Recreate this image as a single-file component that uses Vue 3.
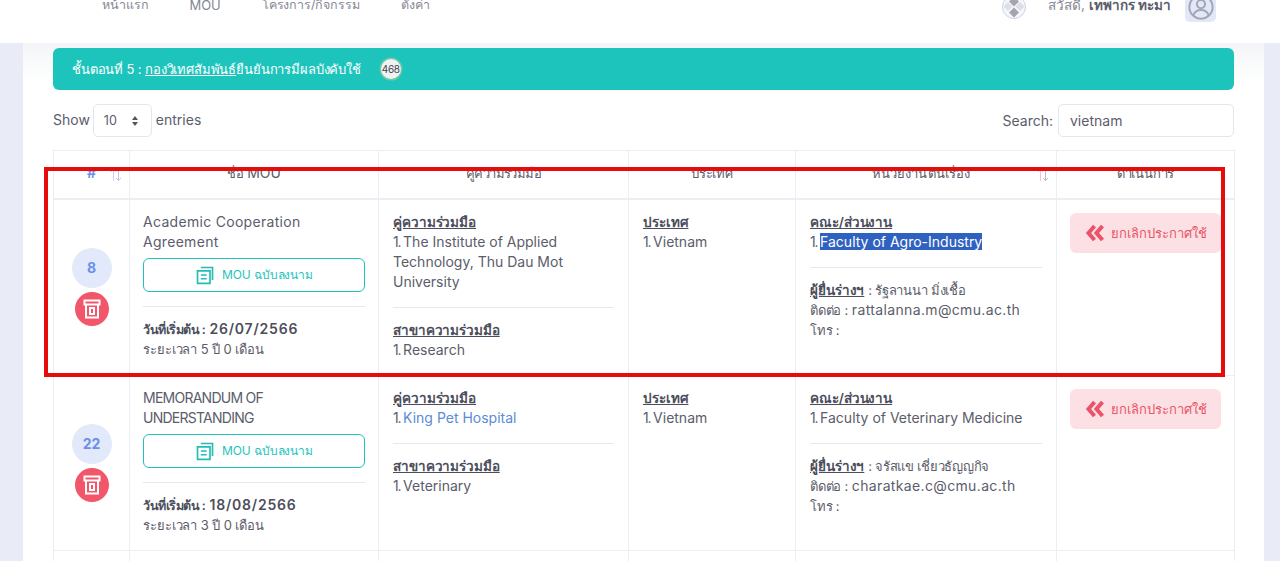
<script setup>
const rows = [
  {
    no: 8,
    name: ['Academic Cooperation', 'Agreement'],
    caps: false,
    start: '26/07/2566',
    years: 5,
    partners: ['The Institute of Applied Technology, Thu Dau Mot University'],
    partnerLink: false,
    field: 'Research',
    faculty: 'Faculty of Agro-Industry',
    selected: true,
    author: 'รัฐลานนา มิ่งเชื้อ',
    mail: 'rattalanna.m@cmu.ac.th'
  },
  {
    no: 22,
    name: ['MEMORANDUM OF', 'UNDERSTANDING'],
    caps: true,
    start: '18/08/2566',
    years: 3,
    partners: ['King Pet Hospital'],
    partnerLink: true,
    field: 'Veterinary',
    faculty: 'Faculty of Veterinary Medicine',
    selected: false,
    author: 'จรัสแข เชี่ยวธัญญกิจ',
    mail: 'charatkae.c@cmu.ac.th'
  }
]
</script>

<template>
  <div class="page">
    <header class="top">
      <nav class="nav">
        <span>หน้าแรก</span>
        <span class="en">MOU</span>
        <span>โครงการ/กิจกรรม</span>
        <span>ตั้งค่า</span>
      </nav>
      <div class="user">
        <svg class="logo" viewBox="0 0 24 24" width="24" height="24">
          <circle cx="12" cy="12" r="11.500" fill="#f6f7fa" stroke="#c9d3e6" />
          <path d="M12 1.500l5 5-5 5-5-5zM12 12.500l5 5-5 5-5-5z" fill="#a5a5b2" />
          <path d="M6 7l4.500 4.500L6 16 1.500 11.500zM18 7l4.500 4.500L18 16l-4.500-4.500z" fill="#dddee7" />
        </svg>
        <span class="hello">สวัสดี, <b>เทพากร ทะมา</b></span>
        <span class="avatar">
          <svg viewBox="0 0 24 24" width="28" height="28" fill="none" stroke="#a3a6b5" stroke-width="1.700">
            <circle cx="12" cy="12" r="10" />
            <circle cx="12" cy="9.500" r="3.500" />
            <path d="M5.500 19c1-3 3.500-4.500 6.500-4.500s5.500 1.500 6.500 4.500" />
          </svg>
        </span>
      </div>
    </header>

    <main class="card">
      <div class="step">
        <span>ชั้นตอนที่ 5 : <u>กองวิเทศสัมพันธ์</u>ยืนยันการมีผลบังคับใช้</span>
        <span class="count">468</span>
      </div>

      <div class="tools">
        <div class="len">
          <span class="lift">Show</span>
          <span class="select">10 <i class="updown"></i></span>
          <span class="lift">entries</span>
        </div>
        <div class="search">
          Search:
          <span class="input">vietnam</span>
        </div>
      </div>

      <table class="tbl">
        <colgroup>
          <col class="c1" /><col class="c2" /><col class="c3" /><col class="c4" /><col class="c5" /><col class="c6" />
        </colgroup>
        <thead>
          <tr>
            <th class="hash">
              <span>#</span>
              <svg class="sort" viewBox="0 0 12 14" width="12" height="14" fill="none" stroke-width="1">
                <path d="M3.500 13V1.500M1 4l2.500-2.500L6 4" stroke="#c9d6f5" />
                <path d="M8.500 1v11.500M6 10l2.500 2.500L11 10" stroke="#c3c7d4" />
              </svg>
            </th>
            <th>ชื่อ <span class="en">MOU</span></th>
            <th class="tight">คู่ความร่วมมือ</th>
            <th>ประเทศ</th>
            <th class="owner">
              หน่วยงานต้นเรื่อง
              <svg class="sort" viewBox="0 0 12 14" width="12" height="14" fill="none" stroke-width="1">
                <path d="M3.500 13V1.500M1 4l2.500-2.500L6 4" stroke="#f5c4ca" />
                <path d="M8.500 1v11.500M6 10l2.500 2.500L11 10" stroke="#b9bcc9" />
              </svg>
            </th>
            <th>ดำเนินการ</th>
          </tr>
        </thead>
        <tbody>
          <tr v-for="r in rows" :key="r.no">
            <td class="num">
              <div class="numwrap">
                <span class="badge">{{ r.no }}</span>
                <span class="del">
                  <svg viewBox="0 0 24 24" width="24" height="24" fill="none" stroke="#fff" stroke-width="2">
                    <path d="M4.500 3.500h15v4h-15z" />
                    <path d="M6 7.500v13h12v-13" />
                    <path d="M10 11v6h4v-6z" />
                  </svg>
                </span>
              </div>
            </td>
            <td class="namecell">
              <div v-for="l in r.name" :key="l" :class="r.caps ? 'caps' : 'title'">{{ l }}</div>
              <div class="mou">
                <svg viewBox="0 0 24 24" width="20" height="20" fill="none" stroke="#22bdb5" stroke-width="2">
                  <path d="M3 7h15v15H3z" />
                  <path d="M7 3h14v15" />
                  <path d="M7 12h7M7 16.500h7" />
                </svg>
                <span>MOU ฉบับลงนาม</span>
              </div>
              <hr class="rule first" />
              <div class="date"><span class="th-date">วันที่เริ่มต้น :</span> {{ r.start }}</div>
              <div class="th dur">ระยะเวลา {{ r.years }} ปี 0 เดือน</div>
            </td>
            <td>
              <div class="lbl">คู่ความร่วมมือ</div>
              <div v-for="p in r.partners" :key="p"><span class="n">1. </span><span :class="{ link: r.partnerLink }">{{ p }}</span></div>
              <hr class="rule" />
              <div class="lbl">สาขาความร่วมมือ</div>
              <div><span class="n">1. </span>{{ r.field }}</div>
            </td>
            <td>
              <div class="lbl">ประเทศ</div>
              <div><span class="n">1. </span>Vietnam</div>
            </td>
            <td>
              <div class="lbl">คณะ/ส่วนงาน</div>
              <div><span class="n">1. </span><span :class="{ sel: r.selected }">{{ r.faculty }}</span></div>
              <hr class="rule" />
              <div><span class="lbl">ผู้ยื่นร่างฯ</span> <span class="th">: {{ r.author }}</span></div>
              <div><span class="th">ติดต่อ :</span> <span class="mail">{{ r.mail }}</span></div>
              <div class="th">โทร :</div>
            </td>
            <td>
              <div class="cancel">
                <svg viewBox="0 0 20 20" width="20" height="20" fill="none" stroke="#ea5468" stroke-width="4">
                  <path d="M9.500 3L3.500 10l6 7M17.500 3l-6 7 6 7" />
                </svg>
                <span>ยกเลิกประกาศใช้</span>
              </div>
            </td>
          </tr>
          <tr class="tail"><td></td><td></td><td></td><td></td><td></td><td></td></tr>
        </tbody>
      </table>
    </main>

    <div class="mark"></div>
  </div>
</template>

<style>
html, body { margin: 0; overflow: hidden; background: #e9ecf6; }
</style>

<style scoped>
.page {
  position: relative;
  height: 561px;
  overflow: hidden;
  font-family: Inter, "Noto Sans", "Liberation Sans", sans-serif;
  font-size: 14px;
  line-height: 20px;
  color: #5b5d6b;
  background: #e9ecf6;
}
.top {
  height: 43px;
  box-sizing: border-box;
  background: #fff;
  display: flex;
  justify-content: space-between;
  padding: 0 64px 33px 102px;
  align-items: flex-start;
}
.nav { display: flex; gap: 41px; line-height: 10px; color: #858796; font-size: 12.500px; letter-spacing: -.1px; }
.nav .en { font-size: 13px; letter-spacing: 0; }
.user { display: flex; align-items: flex-start; color: #858796; margin-top: -5px; font-size: 13.500px; }
.logo { margin-right: 22px; }
.hello { line-height: 20px; margin-right: 14px; }
.hello b { color: #5b5d6b; font-weight: 600; }
.avatar {
  width: 31px; height: 31px; margin-top: -4px;
  background: #e2e8f7; border-radius: 5px;
  display: flex; align-items: center; justify-content: center;
}
.card {
  margin: 0 16px 0 23px;
  padding: 5px 30px 0;
  background: linear-gradient(#f3f5f8, #fff 40px);
}
.step {
  height: 42px;
  box-sizing: border-box;
  padding: 0 19px;
  background: #1dc4bc;
  border-radius: 6px;
  color: #fff;
  display: flex;
  align-items: center;
  gap: 20px;
  font-size: 13px;
  letter-spacing: -.15px;
}
.count {
  width: 20px; height: 20px; border-radius: 50%;
  background: #eef2f7; color: #444;
  box-shadow: 0 0 0 1.500px #6cc9a6;
  font-size: 10px; letter-spacing: -.3px;
  display: flex; align-items: center; justify-content: center;
}
.tools {
  display: flex; justify-content: space-between; align-items: center;
  margin-top: 14px; height: 33px;
}
.len { display: flex; align-items: center; gap: 3px; }
.len .select { margin-right: 1px; }
.lift { margin-top: -2px; }
.search { display: flex; align-items: center; gap: 5px; }
.select, .input {
  box-sizing: border-box; height: 33px;
  border: 1px solid #e4e6ef; border-radius: 5px;
  display: inline-flex; align-items: center;
  color: #5b5d6b;
}
.select { width: 59px; padding-left: 10px; font-size: 12.500px; position: relative; }
.updown {
  position: absolute; right: 13px; top: 11px;
  width: 0; height: 0;
  border-left: 3px solid transparent; border-right: 3px solid transparent;
  border-bottom: 4px solid #555;
}
.updown::after {
  content: ""; position: absolute; left: -3px; top: 6px;
  border-left: 3px solid transparent; border-right: 3px solid transparent;
  border-top: 4px solid #555;
}
.input { width: 176px; padding-left: 11px; }
.tbl {
  margin-top: 13px;
  width: 1181px;
  table-layout: fixed;
  border-collapse: collapse;
  border-top: 1px solid #eceef3;
}
.c1 { width: 76px; } .c2 { width: 249px; } .c3 { width: 250px; }
.c4 { width: 167px; } .c5 { width: 261px; } .c6 { width: 178px; }
.tbl th, .tbl td { border: 1px solid #eceef3; }
.tbl th {
  height: 48px; padding: 0 0 3px; box-sizing: border-box;
  font-weight: 400; color: #5b5d6b; font-size: 13px; letter-spacing: -.2px;
  border-bottom-width: 2px; position: relative;
}
.tbl th .en { font-size: 14px; letter-spacing: 0; }
.tbl th.tight { letter-spacing: -.6px; }
.tbl th.owner { padding-right: 10px; letter-spacing: .1px; }
.tbl td { padding: 12px 14px 0; vertical-align: top; height: 163px; }
.tbl tbody tr:nth-child(2) td { height: 162px; }
.tbl .tail td { height: 40px; padding: 0; }
.hash span { color: #6d8fe8; font-weight: 700; font-size: 14px; }
.sort { position: absolute; right: 7px; top: 17px; }
.owner .sort { right: 7px; }
.tbl td.num { padding: 0; vertical-align: middle; }
.numwrap { display: flex; flex-direction: column; align-items: center; gap: 4px; }
.badge {
  width: 40px; height: 40px; border-radius: 50%;
  background: #e1e9fa; color: #6d8fe8; font-weight: 700;
  display: flex; align-items: center; justify-content: center;
}
.del {
  width: 34px; height: 34px; border-radius: 50%;
  background: #f1566a;
  display: flex; align-items: center; justify-content: center;
}
.tbl td.namecell { padding-left: 13px; padding-right: 13px; }
.title { letter-spacing: .3px; }
.caps { letter-spacing: -.75px; }
.mou {
  margin-top: 6px; height: 34px;
  box-sizing: border-box;
  border: 1px solid #1dc4bc; border-radius: 6px;
  color: #1dc4bc; font-size: 12px; letter-spacing: -.1px;
  display: flex; align-items: center; justify-content: center; gap: 7px;
}
.rule { border: 0; border-top: 1px solid #e6e8ee; margin: 15px 0 12px; }
.rule.first { margin: 14px 0 12px; }
.date { font-weight: 600; color: #4c4e5b; letter-spacing: .8px; }
.th-date { font-size: 12.500px; letter-spacing: -.5px; }
.th { font-size: 13px; letter-spacing: -.25px; }
.dur { margin-top: -1px; letter-spacing: -.1px; }
.mail { letter-spacing: .35px; }
.lbl { font-weight: 600; text-decoration: underline; color: #4c4e5b; font-size: 13.500px; letter-spacing: -.1px; }
.n { letter-spacing: -1.200px; }
.link { color: #5c8bd6; }
.sel { background: #2f62c0; color: #fff; }
.cancel {
  margin: 1px -1px 0;
  height: 40px;
  background: #fde0e4; border-radius: 6px;
  color: #ea5468; font-size: 13px;
  display: flex; align-items: center; justify-content: center; gap: 6px;
}
.mark {
  position: absolute; left: 44px; top: 167px;
  width: 1181px; height: 210px;
  box-sizing: border-box;
  border: 4px solid #e80b0b;
  pointer-events: none;
}
</style>
